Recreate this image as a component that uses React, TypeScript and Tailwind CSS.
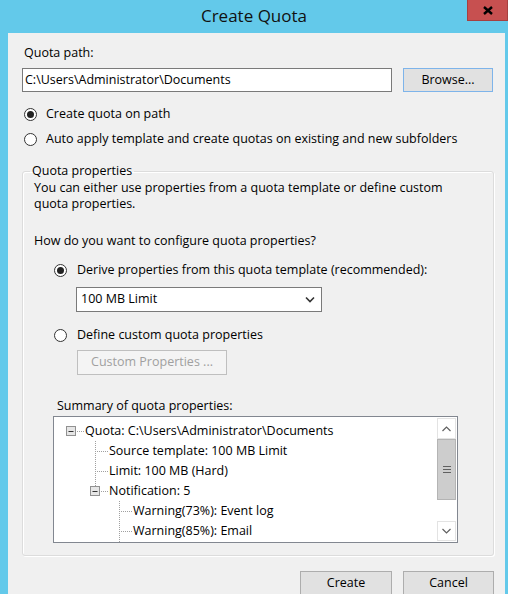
import React from 'react';

const font = { fontFamily: '"Open Sans", "Noto Sans", sans-serif' };

function Radio({ checked }: { checked?: boolean }) {
  return (
    <span className="w-[13px] h-[13px] rounded-full border border-[#333333] bg-white flex items-center justify-center shrink-0">
      {checked && <span className="w-[7px] h-[7px] rounded-full bg-[#222222]" />}
    </span>
  );
}

function Dotted({ d }: { d: string }) {
  return <path d={d} stroke="#a0a0a0" strokeWidth="1" strokeDasharray="1 1" fill="none" />;
}

function MinusBox({ x }: { x: number }) {
  return (
    <g>
      <rect x={x + 0.5} y={5.5} width={9} height={9} fill="#e6e6e6" stroke="#919191" />
      <path d={`M${x + 2.5} 10.5 H${x + 7.5}`} stroke="#333" strokeWidth="1" />
    </g>
  );
}

type Row = { text: string; gutter: number; draw: React.ReactNode };

const ROWS: Row[] = [
  {
    text: 'Quota: C:\\Users\\Administrator\\Documents',
    gutter: 31,
    draw: (
      <>
        <MinusBox x={12} />
        <Dotted d="M23 10.5 H30" />
      </>
    ),
  },
  {
    text: 'Source template: 100 MB Limit',
    gutter: 55,
    draw: <Dotted d="M41.5 0 V20 M43 10.5 H54" />,
  },
  {
    text: 'Limit: 100 MB (Hard)',
    gutter: 55,
    draw: <Dotted d="M41.5 0 V20 M43 10.5 H54" />,
  },
  {
    text: 'Notification: 5',
    gutter: 55,
    draw: (
      <>
        <Dotted d="M41.5 0 V5" />
        <MinusBox x={36} />
        <Dotted d="M47 10.5 H54" />
      </>
    ),
  },
  {
    text: 'Warning(73%): Event log',
    gutter: 79,
    draw: <Dotted d="M65.5 0 V20 M67 10.5 H78" />,
  },
  {
    text: 'Warning(85%): Email',
    gutter: 79,
    draw: <Dotted d="M65.5 0 V20 M67 10.5 H78" />,
  },
  {
    text: '',
    gutter: 79,
    draw: <Dotted d="M65.5 0 V20" />,
  },
];

function Chevron({ up }: { up?: boolean }) {
  return (
    <svg width="9" height="6" viewBox="0 0 9 6">
      <path d={up ? 'M0.5 5 L4.5 1 L8.5 5' : 'M0.5 1 L4.5 5 L8.5 1'} stroke="#606060" strokeWidth="1.2" fill="none" />
    </svg>
  );
}

export default function App() {
  return (
    <div className="w-[508px] h-[594px] bg-[#63c9ea] relative overflow-hidden text-[12.5px] text-black" style={font}>
      {/* title bar */}
      <div className="h-[33px] flex items-center justify-center text-[17px] text-[#111] pb-[1px]">Create Quota</div>
      <div className="absolute top-0 right-0 w-[41px] h-[21px] bg-[#c75050] border border-t-0 border-[#a64040] flex items-center justify-center">
        <svg width="10" height="9" viewBox="0 0 10 9">
          <path d="M1 1 L9 8 M9 1 L1 8" stroke="#000" strokeWidth="2.4" />
        </svg>
      </div>

      {/* client area */}
      <div className="ml-[8px] mr-[3px] h-[561px] bg-[#f0f0f0] pl-[14px] pt-[12px]">
        <div className="pl-[2px] leading-[16px]">Quota path:</div>
        <div className="flex gap-[11px] mt-[7px]">
          <div className="w-[370px] h-[24px] border border-[#7a7a7a] bg-white flex items-center pl-[2px]">
            C:\Users\Administrator\Documents
          </div>
          <button className="w-[90px] h-[24px] bg-[#e1e1e1] border border-[#7eb4ea] flex items-center justify-center">
            Browse...
          </button>
        </div>

        <div className="flex items-center gap-[9px] h-[16px] mt-[14px] pl-[2px]">
          <Radio checked />
          <span>Create quota on path</span>
        </div>
        <div className="flex items-center gap-[9px] h-[16px] mt-[9px] pl-[2px]">
          <Radio />
          <span>Auto apply template and create quotas on existing and new subfolders</span>
        </div>

        {/* group box */}
        <fieldset className="mt-[16px] w-[472px] h-[393px] border border-[#dcdcdc] rounded-[3px] shadow-[inset_1px_1px_0_#fff,1px_1px_0_#fff] pl-[11px]">
          <legend className="px-[2px] ml-[-4px] leading-[16px]">Quota properties</legend>
          <div className="leading-[16px] mt-[1px]">
            You can either use properties from a quota template or define custom
            <br />
            quota properties.
          </div>
          <div className="leading-[16px] mt-[21px]">How do you want to configure quota properties?</div>

          <div className="pl-[20px]">
            <div className="flex items-center gap-[10px] h-[16px] mt-[13px]">
              <Radio checked />
              <span>Derive properties from this quota template (recommended):</span>
            </div>
            <div className="ml-[22px] mt-[9px] w-[246px] h-[25px] border border-[#7a7a7a] bg-white flex items-center justify-between pl-[4px] pr-[6px]">
              <span>100 MB Limit</span>
              <svg width="10" height="7" viewBox="0 0 10 7">
                <path d="M1 1.5 L5 5.5 L9 1.5" stroke="#333" strokeWidth="1.6" fill="none" />
              </svg>
            </div>

            <div className="flex items-center gap-[10px] h-[16px] mt-[15px]">
              <Radio />
              <span>Define custom quota properties</span>
            </div>
            <div className="ml-[23px] mt-[7px] w-[150px] h-[25px] border border-[#bfbfbf] bg-[#f4f4f4] text-[#a0a0a0] flex items-center justify-center">
              Custom Properties ...
            </div>
          </div>

          <div className="leading-[16px] mt-[23px] ml-[23px]">Summary of quota properties:</div>
          <div className="ml-[19px] mt-[2px] w-[405px] h-[127px] border border-[#828790] bg-white flex overflow-hidden">
            <div className="flex-1 pt-[4px]">
              {ROWS.map((r, i) => (
                <div key={i} className="flex items-center h-[20px]">
                  <svg width={r.gutter} height="20" className="shrink-0">
                    {r.draw}
                  </svg>
                  <span className="whitespace-nowrap">{r.text}</span>
                </div>
              ))}
            </div>
            <div className="w-[19px] mr-[1px] my-[1px] flex flex-col bg-white">
              <div className="h-[21px] border border-[#e3e3e3] flex items-center justify-center">
                <Chevron up />
              </div>
              <div className="h-[61px] bg-[#cdcdcd] border border-[#b4b4b4] flex flex-col items-center justify-center gap-[2px]">
                <span className="w-[8px] h-[1px] bg-[#606060]" />
                <span className="w-[8px] h-[1px] bg-[#606060]" />
                <span className="w-[8px] h-[1px] bg-[#606060]" />
              </div>
              <div className="flex-1" />
              <div className="h-[20px] border border-[#e3e3e3] flex items-center justify-center">
                <Chevron />
              </div>
            </div>
          </div>
        </fieldset>

        <div className="flex justify-end gap-[11px] mt-[15px] w-[472px]">
          <button className="w-[92px] h-[24px] bg-[#e1e1e1] border border-[#adadad] flex items-center justify-center">
            Create
          </button>
          <button className="w-[91px] h-[24px] bg-[#e1e1e1] border border-[#adadad] flex items-center justify-center">
            Cancel
          </button>
        </div>
      </div>
    </div>
  );
}
